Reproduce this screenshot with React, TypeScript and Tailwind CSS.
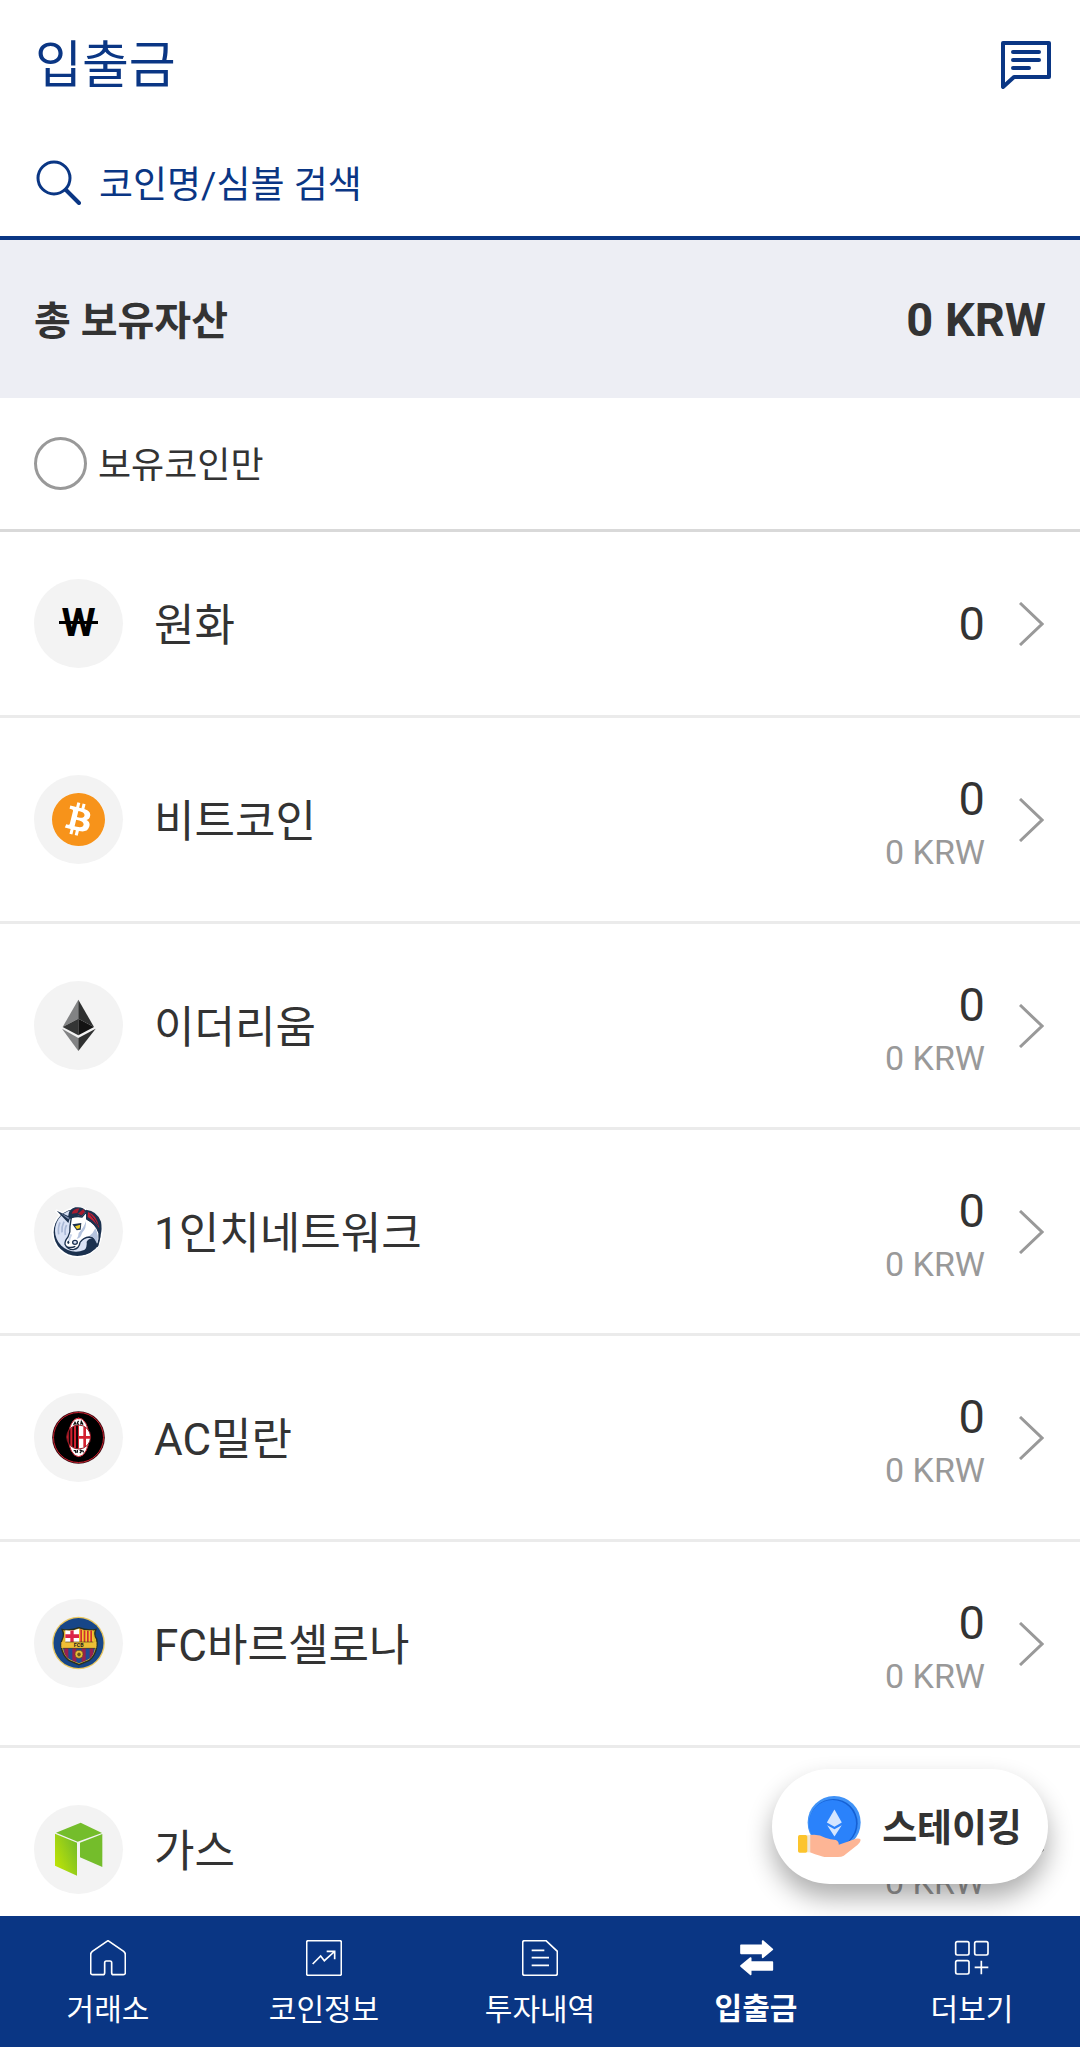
import React, { useState } from 'react';
import { SiBitcoin } from 'react-icons/si';

interface Coin {
  id: string;
  name: string;
  amount: string;
  krw?: string;
  icon: React.ReactNode;
}

// Won sign: a W with one bar that runs past both sides
const WonIcon = () => (
  <span className="relative text-[39px] leading-none font-bold text-black">
    W
    <span className="absolute inset-x-[-2px] top-[17px] h-[3px] bg-black" />
  </span>
);

const EthIcon = () => (
  <svg viewBox="0 0 267 267" className="size-full" aria-hidden="true">
    <path d="M133 56 86 138 133 113Z" fill="#828384" />
    <path d="M133 56 180 138 133 113Z" fill="#2f3030" />
    <path d="M86 138 133 113V163Z" fill="#343535" />
    <path d="M180 138 133 113V163Z" fill="#131313" />
    <path d="M84 143 133 171V210Z" fill="#828384" />
    <path d="M185 143 133 171V210Z" fill="#2f3030" />
  </svg>
);

const OneInchIcon = () => (
  <svg viewBox="0 0 267 267" className="size-full" aria-hidden="true">
    <circle cx="130" cy="136" r="76" fill="#fff" />
    <path d="M66 70 112 92 104 112Z" fill="#fff" stroke="#fff" strokeWidth="8" />
    <circle cx="130" cy="136" r="71" fill="#1b314f" />
    <circle cx="126" cy="131" r="63" fill="#d9e2f5" />
    <path d="M78 106Q71 122 74 142M90 104Q82 120 84 136M98 114Q91 126 94 144" fill="none" stroke="#a9b8d6" strokeWidth="5" />
    {/* shadow under the jaw */}
    <path d="M184 152Q164 152 158 164Q160 180 150 192Q140 202 118 202Q168 212 194 174Z" fill="#1b314f" />
    {/* neck and head */}
    <path
      d="M112 92Q130 86 144 90L158 74 158 96Q184 108 195 138Q198 158 190 178Q184 150 166 150Q148 152 138 166Q136 184 118 188Q100 188 93 172Q92 162 102 150Q110 134 108 118Z"
      fill="#fff"
      stroke="#1b314f"
      strokeWidth="4"
      strokeLinejoin="round"
    />
    <path d="M184 124Q196 146 189 170Q180 148 166 147Q178 138 184 124Z" fill="#b4c3de" />
    <path d="M156 102Q158 124 144 138Q140 154 128 156Q134 146 134 138Q150 122 156 102Z" fill="#b4c3de" />
    <path d="M112 142Q106 154 105 162" fill="none" stroke="#c9d5ea" strokeWidth="6" />
    {/* mane */}
    <path d="M102 90Q104 66 124 61Q148 58 156 72L144 88Q126 82 110 96Z" fill="#1b314f" />
    <path d="M113 80Q118 65 136 64L130 78ZM132 80 148 66 153 74 143 85Z" fill="#a61c30" />
    <path d="M156 68Q190 72 201 104Q205 126 200 142Q186 112 158 98Z" fill="#1b314f" />
    <path d="M162 75Q188 82 196 124Q180 100 161 90Z" fill="#c31d32" />
    <path d="M168 82Q184 98 192 116" fill="none" stroke="#1b314f" strokeWidth="3" />
    <path d="M68 71 109 90 103 108Z" fill="#1b314f" />
    <path d="M80 79 106 92 103 97Z" fill="#7f90b0" />
    <path d="M115 112 142 108 140 128 128 130Z" fill="#1b314f" />
    <path d="M123 118 139 113 137 124 129 126Z" fill="#f2cf27" />
    <ellipse cx="123" cy="166" rx="7" ry="6" fill="#d9e2f5" stroke="#1b314f" strokeWidth="4" />
    <ellipse cx="103" cy="166" rx="3" ry="5" fill="#1b314f" />
    <path d="M99 180Q112 184 124 178" fill="none" stroke="#1b314f" strokeWidth="4" />
  </svg>
);

const MilanIcon = () => (
  <svg viewBox="0 0 267 267" className="size-full" aria-hidden="true">
    <defs>
      <clipPath id="milan">
        <circle cx="134" cy="132" r="35" />
      </clipPath>
    </defs>
    <circle cx="133.5" cy="133.5" r="79" fill="#3a0a10" />
    <circle cx="133.5" cy="133.5" r="75" fill="#000" stroke="#c9202f" strokeWidth="3" />
    <ellipse cx="134" cy="133" rx="31" ry="58" fill="#fff" stroke="#c9202f" strokeWidth="3" />
    <g clipPath="url(#milan)">
      <path d="M97 95H135V170H97Z" fill="#d3202f" />
      <path d="M104 95H109V170H104ZM115 95H120V170H115ZM126 95H132V170H126Z" fill="#160406" />
      <path d="M135 95H172V170H135Z" fill="#fff" />
      <path d="M148 95H156V170H148ZM135 129H172V137H135Z" fill="#d3202f" />
    </g>
    <circle cx="134" cy="132" r="36" fill="none" stroke="#8e1823" strokeWidth="3" />
    <path d="M119 96 123 88 127 95M134 84Q127 90 134 95M140 95 142 86 147 95" fill="none" stroke="#111" strokeWidth="4" />
    <path d="M119 173H124L126 180M130 171V179M137 171 143 173 138 180M146 173 149 178" fill="none" stroke="#111" strokeWidth="4" />
    <path d="M134 72 137 79H131Z" fill="#c9202f" />
  </svg>
);

const BarcaIcon = () => (
  <svg viewBox="0 0 267 267" className="size-full" aria-hidden="true">
    <defs>
      <clipPath id="barca">
        <path d="M94 94Q114 98 135 89Q156 98 176 94L180 128 184 138Q182 168 164 181L135 193 106 181Q88 168 86 138L94 128Z" />
      </clipPath>
    </defs>
    <circle cx="133.5" cy="132" r="79" fill="#e9c760" />
    <circle cx="133.5" cy="132" r="75" fill="#174688" />
    <path
      d="M84 91Q112 96 135 86Q158 96 186 91Q178 106 188 120Q190 130 189 140Q184 172 166 184L135 197 104 184Q86 172 81 140Q80 130 85 120Q92 106 84 91Z"
      fill="#e2b62f"
      stroke="#29301f"
      strokeWidth="4"
    />
    <g clipPath="url(#barca)">
      <path d="M86 88H135V130H86Z" fill="#fff" />
      <path d="M109 88H119V130H109ZM86 106H135V117H86Z" fill="#db2347" />
      <path d="M135 88H184V130H135Z" fill="#f3c632" />
      <path d="M139 88H144V130H139ZM149 88H154V130H149ZM159 88H164V130H159ZM169 88H174V130H169Z" fill="#cf2f2f" />
      <path d="M80 147H190V200H80Z" fill="#204b93" />
      <path d="M91 147H103V200H91ZM115 147H127V200H115ZM143 147H155V200H143ZM167 147H178V200H167Z" fill="#97204e" />
    </g>
    <path d="M82 129H187V147H82Z" fill="#eebf35" />
    <path d="M94 129H178M86 148H184" stroke="#4b4220" strokeWidth="2" />
    <text x="134" y="144" textAnchor="middle" fontSize="16" fontWeight="700" fill="#1c1c1c">FCB</text>
    <circle cx="135" cy="166" r="12" fill="#e9bd38" stroke="#5b4a1d" strokeWidth="2" />
    <path d="M135 160 141 165 138 172H132L129 165Z" fill="#6a561f" />
  </svg>
);

const GasIcon = () => (
  <svg viewBox="0 0 267 267" className="size-full" aria-hidden="true">
    <defs>
      <linearGradient id="gas" x1="0" y1="1" x2="1" y2="0.2">
        <stop offset="0" stopColor="#c8e900" />
        <stop offset="1" stopColor="#74bb2a" />
      </linearGradient>
    </defs>
    <path d="M66 83 140 53 204 84 131 110Z" fill="#74bd2b" />
    <path d="M63 86 129 113V212L63 182Z" fill="url(#gas)" />
    <path d="M138 113 205 87V186L138 157Z" fill="#74bd2b" />
  </svg>
);

const StakingIcon = () => (
  <svg viewBox="0 0 190 184" className="h-[61px] w-[63px]" aria-hidden="true">
    <circle cx="109" cy="80" r="80" fill="#3f92f7" />
    <circle cx="107" cy="82" r="73" fill="#1560d4" />
    <circle cx="104" cy="83" r="71" fill="#2a82fb" />
    <path d="M110 41 132 80 110 93 87 80Z" fill="#d4e6ff" />
    <path d="M88 88 110 100 132 88 110 122Z" fill="#d4e6ff" />
    <path d="M36 118Q62 114 82 126Q98 132 114 133Q123 136 123 147Q150 138 174 129Q186 127 189 132Q189 140 180 147L138 180Q132 184 120 184H80Q70 183 36 170Z" fill="#fdb595" />
    <path d="M27 118H37V170H27Z" fill="#f1e6d3" />
    <rect y="118" width="28" height="53" rx="5" fill="#fcc42d" />
  </svg>
);

const coins: Coin[] = [
  { id: 'krw', name: '원화', amount: '0', icon: <WonIcon /> },
  {
    id: 'btc', name: '비트코인', amount: '0', krw: '0 KRW',
    icon: <span className="rounded-full bg-white"><SiBitcoin className="size-[53px] text-[#f7931a]" /></span>,
  },
  { id: 'eth', name: '이더리움', amount: '0', krw: '0 KRW', icon: <EthIcon /> },
  { id: '1inch', name: '1인치네트워크', amount: '0', krw: '0 KRW', icon: <OneInchIcon /> },
  { id: 'acm', name: 'AC밀란', amount: '0', krw: '0 KRW', icon: <MilanIcon /> },
  { id: 'bar', name: 'FC바르셀로나', amount: '0', krw: '0 KRW', icon: <BarcaIcon /> },
  { id: 'gas', name: '가스', amount: '0', krw: '0 KRW', icon: <GasIcon /> },
];

const navItems = [
  {
    label: '거래소',
    icon: <path d="M54 2 101 34Q106 38 106 44V98Q106 104 100 104H71Q65 104 65 98V68Q65 63 60 63H49Q44 63 44 68V98Q44 104 38 104H8Q2 104 2 98V44Q2 38 7 34Z" />,
  },
  {
    label: '코인정보',
    icon: <><rect x="2" y="2" width="104" height="104" rx="5" /><path d="M20 72 44 48 55 62 84 36M62 34H86V58" /></>,
  },
  {
    label: '투자내역',
    icon: <><path d="M8 2H72L106 34V100Q106 106 100 106H8Q2 106 2 100V8Q2 2 8 2Z" /><path d="M29 31H67M29 53H81M29 76H81" /></>,
  },
  {
    label: '입출금',
    active: true,
    icon: <path d="M9 16H74V3L103 28 74 52V40H9ZM103 66H38V54L9 78 38 103V90H103Z" fill="#fff" strokeLinejoin="round" />,
  },
  {
    label: '더보기',
    icon: <><rect x="5" y="5" width="40" height="40" rx="5" /><rect x="62" y="5" width="40" height="40" rx="5" /><rect x="5" y="62" width="40" height="40" rx="5" /><path d="M62 82H103M82 62V103" /></>,
  },
];

const CoinRow: React.FC<{ coin: Coin }> = ({ coin }) => (
  <li className="border-b-3 border-[#ebebeb]">
    <a href={`#${coin.id}`} className={`flex items-center pr-9 pl-[34px] ${coin.krw ? 'h-[203px]' : 'h-[183px]'}`}>
      <span className="flex size-[89px] shrink-0 items-center justify-center rounded-full bg-[#f3f3f3]">{coin.icon}</span>
      <span className="ml-[31px] flex-1 pt-1 text-[44px]">{coin.name}</span>
      <span className="flex flex-col text-right">
        <span className="text-[47px] leading-[64px]">{coin.amount}</span>
        {coin.krw && <span className="text-[34px] leading-[42px] text-[#999]">{coin.krw}</span>}
      </span>
      <svg viewBox="0 0 25 44" className="ml-[34px] h-11 w-[25px]" fill="none" stroke="#999" strokeWidth="3" aria-hidden="true">
        <path d="M1 1 23 22 1 43" />
      </svg>
    </a>
  </li>
);

export default function App() {
  const [search, setSearch] = useState('');
  const [onlyOwned, setOnlyOwned] = useState(false);

  const visibleCoins = coins.filter(c =>
    c.name.includes(search.trim()) && (!onlyOwned || Number(c.amount) > 0)
  );

  return (
    <div className="relative flex h-screen flex-col bg-white font-[Roboto,'Noto_Sans_CJK_KR',sans-serif] text-[#333]">
      <header className="flex h-[129px] shrink-0 items-center justify-between pr-[29px] pl-[35px] text-[#0a3684]">
        <h1 className="pt-1 text-[51px]">입출금</h1>
        <button type="button" aria-label="메시지">
          <svg viewBox="0 0 50 48" className="h-12 w-[50px]" fill="none" stroke="currentColor" strokeWidth="4" strokeLinecap="round" strokeLinejoin="round">
            <path d="M2 46V2H48V36H13L2 46Z" />
            <path d="M12 11H38M12 19H38M12 27H28" />
          </svg>
        </button>
      </header>

      <div className="flex h-[111px] shrink-0 items-center gap-[18px] border-b-4 border-[#0a3684] px-9 text-[#0a3684]">
        <svg viewBox="0 0 45 45" className="size-[45px]" fill="none" stroke="currentColor" strokeWidth="3" strokeLinecap="round" aria-hidden="true">
          <circle cx="18" cy="18" r="16" />
          <path d="M30 30 43 43" strokeWidth="4" />
        </svg>
        <input
          type="text"
          aria-label="코인명/심볼 검색"
          placeholder="코인명/심볼 검색"
          value={search}
          onChange={(e) => setSearch(e.target.value)}
          className="min-w-0 flex-1 bg-transparent pt-1.5 text-[37px] placeholder:text-[#0a3684] focus:outline-none"
        />
      </div>

      <main className="min-h-0 flex-1 overflow-y-auto [scrollbar-width:none]">
        <div className="flex h-[158px] items-center justify-between bg-[#edeef4] px-[34px] pt-0.5 font-bold">
          <h2 className="pt-1 text-[40px]">총 보유자산</h2>
          <span className="text-[47px]">0 KRW</span>
        </div>

        <div className="flex h-[134px] items-center border-b-3 border-[#d9d9d9] px-[34px]">
          <label className="flex items-center gap-[11px] text-[36px]">
            <input
              type="checkbox"
              checked={onlyOwned}
              onChange={(e) => setOnlyOwned(e.target.checked)}
              className="size-[53px] appearance-none rounded-full border-3 border-[#999] checked:bg-[#0a3684]"
            />
            <span className="pt-1">보유코인만</span>
          </label>
        </div>

        <ul>
          {visibleCoins.map(coin => <CoinRow key={coin.id} coin={coin} />)}
        </ul>
      </main>

      <button
        type="button"
        className="absolute right-8 bottom-[163px] flex h-[115px] items-center gap-[21px] rounded-full bg-white pr-[26px] pl-[26px] text-[38px] font-bold shadow-[0_14px_26px_rgba(0,0,0,0.32)]"
      >
        <StakingIcon />
        <span className="pt-1">스테이킹</span>
      </button>

      <nav className="relative grid h-[131px] shrink-0 grid-cols-5 bg-[#0a3684] text-[30px] text-white">
        {navItems.map(item => (
          <a key={item.label} href={`#${item.label}`} className={`flex flex-col items-center pt-6 ${item.active ? 'gap-2.5 font-bold' : 'gap-[11px]'}`}>
            <svg viewBox="0 0 108 108" className="size-9" fill="none" stroke="#fff" strokeWidth="5" aria-hidden="true">
              {item.icon}
            </svg>
            {item.label}
          </a>
        ))}
      </nav>
    </div>
  );
}
